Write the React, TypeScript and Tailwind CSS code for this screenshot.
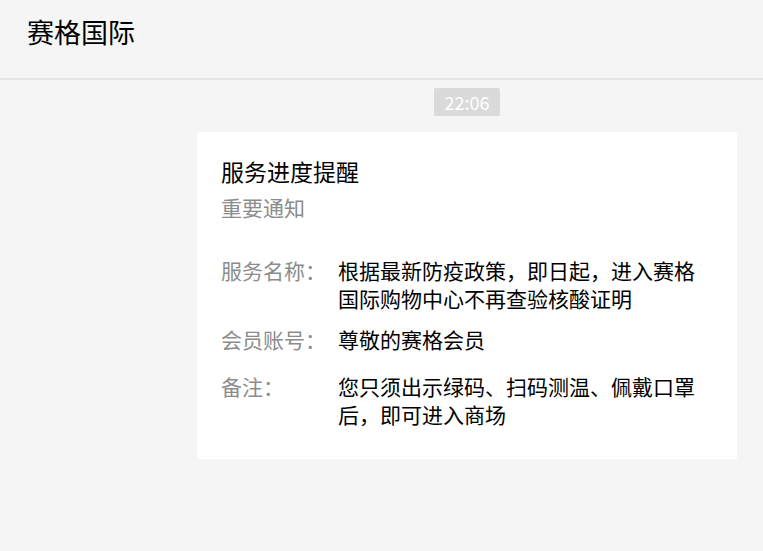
import React from 'react';

const rows = [
  {
    label: '服务名称：',
    value: '根据最新防疫政策，即日起，进入赛格国际购物中心不再查验核酸证明',
    spacing: 'mt-[35px]',
  },
  { label: '会员账号：', value: '尊敬的赛格会员', spacing: 'mt-[13px]' },
  {
    label: '备注：',
    value: '您只须出示绿码、扫码测温、佩戴口罩后，即可进入商场',
    spacing: 'mt-[19px]',
  },
];

const App: React.FC = () => {
  return (
    <div
      className="min-h-screen bg-[#f5f5f5] text-black"
      style={{ fontFamily: '"Noto Sans CJK SC", "Noto Sans", sans-serif' }}
    >
      {/* Header */}
      <header className="h-[80px] border-b-2 border-[#e6e6e6] flex items-center pl-[27px] pb-[14px]">
        <h1 className="text-[27px] leading-[36px] font-normal">赛格国际</h1>
      </header>

      <div className="ml-[197px] w-[540px] flex flex-col items-center pt-[8px]">
        {/* Time stamp */}
        <div className="h-[28px] w-[66px] rounded-[2px] bg-[#dadada] text-white text-[18px] leading-[28px] text-center">
          22:06
        </div>

        {/* Message card */}
        <div className="mt-[16px] w-full bg-white rounded-[2px] pl-[24px] pr-[24px] pt-[24px] pb-[31px]">
          <div className="text-[23px] leading-[30px]">服务进度提醒</div>
          <div className="mt-[7px] text-[21px] leading-[28px] text-[#8c8c8c]">重要通知</div>

          {rows.map((row) => (
            <div key={row.label} className={`flex ${row.spacing}`}>
              <div className="w-[117px] shrink-0 text-[21px] leading-[28px] text-[#8c8c8c]">
                {row.label}
              </div>
              <div className="w-[360px] text-[21px] leading-[28px] text-black">{row.value}</div>
            </div>
          ))}
        </div>
      </div>
    </div>
  );
};

export default App;
